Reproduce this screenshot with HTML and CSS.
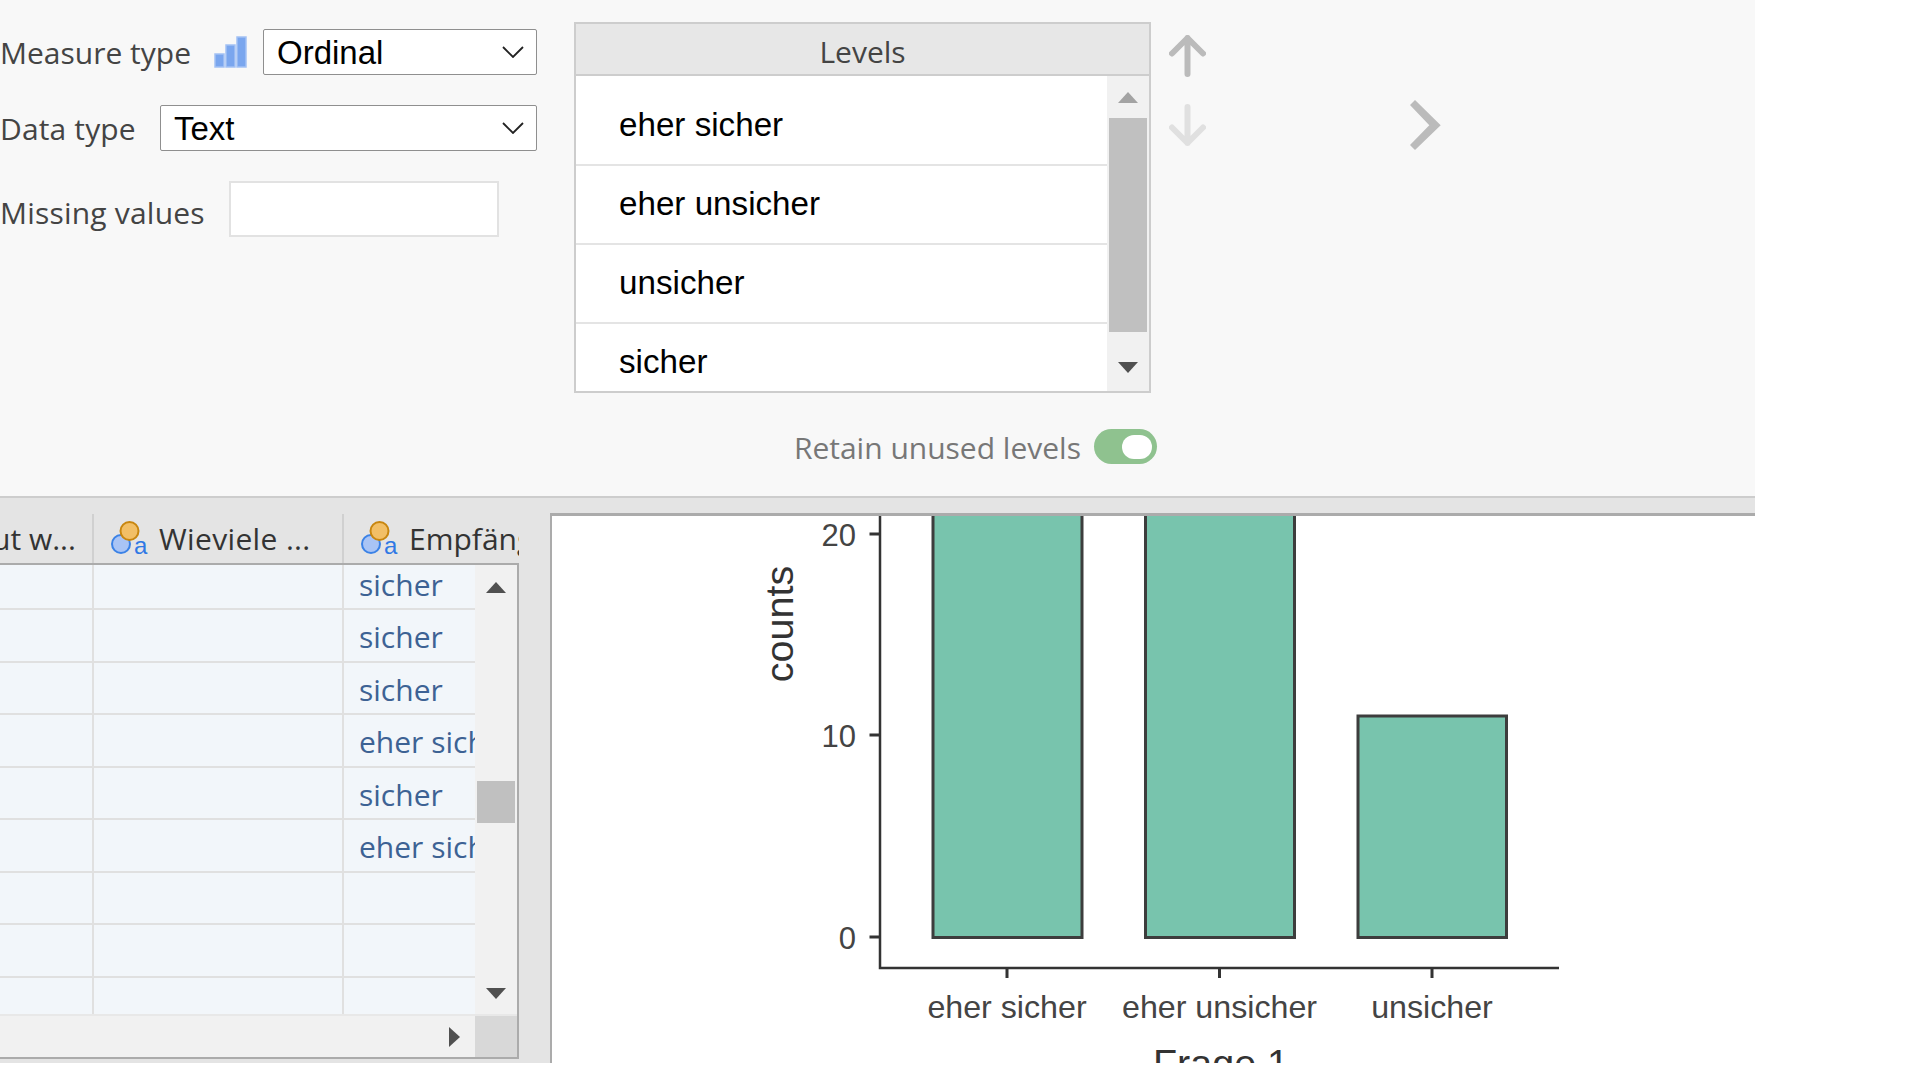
FILE: index.html
```html
<!DOCTYPE html>
<html lang="de">
<head>
<meta charset="utf-8">
<title>Levels</title>
<link rel="stylesheet" href="styles.css">
</head>
<body>
<div class="app">
  <section class="props">
    <div class="form">
      <div class="form-row row-measure">
        <span class="label label-measure">Measure type</span>
        <svg class="measure-icon" width="33" height="32" viewBox="0 0 33 32"><rect x="1" y="18" width="9" height="13"/><rect x="12" y="9" width="9" height="22"/><rect x="23" y="1" width="9" height="30"/></svg>
        <div class="select select-measure"><span>Ordinal</span><svg class="caret" width="22" height="12" viewBox="0 0 22 12"><path d="M1 1l10 10L21 1"/></svg></div>
      </div>
      <div class="form-row row-data">
        <span class="label label-data">Data type</span>
        <div class="select select-data"><span>Text</span><svg class="caret" width="22" height="12" viewBox="0 0 22 12"><path d="M1 1l10 10L21 1"/></svg></div>
      </div>
      <div class="form-row row-missing">
        <span class="label label-missing">Missing values</span>
        <div class="input"></div>
      </div>
    </div>
    <div class="levels-col">
      <div class="levels">
        <div class="levels-head">Levels</div>
        <div class="levels-body">
          <div class="levels-list">
            <div class="level">eher sicher</div>
            <div class="level">eher unsicher</div>
            <div class="level">unsicher</div>
            <div class="level">sicher</div>
          </div>
          <div class="vscroll vscroll-levels">
            <span class="tri tri-up tri-faint"></span>
            <span class="thumb thumb-levels"></span>
            <span class="tri tri-down"></span>
          </div>
        </div>
      </div>
      <div class="retain">
        <span class="retain-label">Retain unused levels</span>
        <span class="toggle"><span class="knob"></span></span>
      </div>
    </div>
    <div class="move">
      <svg class="arrow arrow-on" width="37" height="42" viewBox="0 0 37 42"><path d="M18.500 39V3M3 18.500 18.500 3 34 18.500"/></svg>
      <svg class="arrow arrow-off" width="37" height="42" viewBox="0 0 37 42"><path d="M18.500 3v36M3 23.500 18.500 39 34 23.500"/></svg>
    </div>
    <svg class="chevron" width="31" height="50" viewBox="0 0 31 50"><polygon points="5,0 30.700,25.300 5,50 0,45 19.300,25.300 0,5"/></svg>
  </section>

  <section class="lower">
    <div class="table">
      <div class="thead">
        <div class="th th-a"><span class="th-text th-text-a">ut w...</span></div>
        <div class="th th-b">
          <svg class="var-icon" width="40" height="36" viewBox="0 0 40 36"><circle cx="11" cy="23" r="9"/><circle class="orange" cx="19.500" cy="10" r="9"/><text x="24" y="33">a</text></svg>
          <span class="th-text">Wieviele ...</span>
        </div>
        <div class="th th-c">
          <svg class="var-icon" width="40" height="36" viewBox="0 0 40 36"><circle cx="11" cy="23" r="9"/><circle class="orange" cx="19.500" cy="10" r="9"/><text x="24" y="33">a</text></svg>
          <span class="th-text">Empfäng</span>
        </div>
      </div>
      <div class="tbody">
        <div class="tmain">
          <div class="tdata">
            <div class="tr"><div class="td"></div><div class="td"></div><div class="td td-val">sicher</div></div>
            <div class="tr"><div class="td"></div><div class="td"></div><div class="td td-val">sicher</div></div>
            <div class="tr"><div class="td"></div><div class="td"></div><div class="td td-val">sicher</div></div>
            <div class="tr"><div class="td"></div><div class="td"></div><div class="td td-val">eher sicher</div></div>
            <div class="tr"><div class="td"></div><div class="td"></div><div class="td td-val">sicher</div></div>
            <div class="tr"><div class="td"></div><div class="td"></div><div class="td td-val">eher sicher</div></div>
            <div class="tr"><div class="td"></div><div class="td"></div><div class="td td-val"></div></div>
            <div class="tr"><div class="td"></div><div class="td"></div><div class="td td-val"></div></div>
            <div class="tr"><div class="td"></div><div class="td"></div><div class="td td-val"></div></div>
          </div>
          <div class="vscroll vscroll-table">
            <span class="tri tri-up"></span>
            <span class="thumb thumb-table"></span>
            <span class="tri tri-down"></span>
          </div>
        </div>
        <div class="hbar">
          <div class="hbar-track"><span class="tri-right"></span></div>
          <div class="hbar-corner"></div>
        </div>
      </div>
    </div>
    <div class="plot">
      <svg class="chart" width="1203" height="547" viewBox="552 516 1203 547">
        <g class="bars">
          <rect x="933" y="480" width="149" height="457.500"/>
          <rect x="1145.500" y="480" width="149" height="457.500"/>
          <rect x="1358" y="716" width="148.500" height="221.500"/>
        </g>
        <path class="axis" d="M880 515V968H1559"/>
        <path class="tick" d="M869.500 534H880M869.500 735H880M869.500 937H880M1007 968V978M1219.500 968V978M1432 968V978"/>
        <g class="ticks-y">
          <text x="856" y="546">20</text>
          <text x="856" y="747">10</text>
          <text x="856" y="949">0</text>
        </g>
        <g class="ticks-x">
          <text x="1007" y="1017.500">eher sicher</text>
          <text x="1219.500" y="1017.500">eher unsicher</text>
          <text x="1432" y="1017.500">unsicher</text>
        </g>
        <text class="axis-title" transform="translate(793 624) rotate(-90)">counts</text>
        <text class="axis-title" x="1221" y="1077">Frage 1</text>
      </svg>
    </div>
  </section>
</div>
</body>
</html>
```

FILE: styles.css
```css
* { box-sizing: border-box; }
html, body { margin: 0; padding: 0; background: #fff; overflow: hidden; }
body { width: 1920px; height: 1080px; font-family: "Open Sans", "Noto Sans", sans-serif; }

.app { width: 1755px; height: 1063px; display: flex; flex-direction: column; }

/* top properties panel */
.props { height: 498px; flex: none; display: flex; align-items: flex-start; background: #f8f8f8; border-bottom: 2px solid #cdcdcd; }
.form { width: 537px; flex: none; padding-top: 29px; }
.form-row { display: flex; align-items: center; }
.row-data { margin-top: 30px; }
.row-missing { margin-top: 30px; }
.label { font-size: 30px; color: #444; white-space: nowrap; flex: none; }
.label-measure { width: 191px; padding-top: 1px; }
.label-data { width: 135px; letter-spacing: 0.150px; }
.label-missing { width: 203px; padding-top: 7px; letter-spacing: 0.200px; }
.measure-icon { margin: 0 0 0 23px; flex: none; }
.measure-icon rect { fill: #7aa6ee; stroke: #a3c1f4; stroke-width: 1.500; }
.select { height: 46px; background: #fff; border: 1.500px solid #8f8f8f; border-radius: 2px; display: flex; align-items: center; justify-content: space-between; padding: 0 12px 0 13px; font: 33px "Liberation Sans", Arial, sans-serif; color: #000; }
.select span { position: relative; top: 1px; }
.select-measure { width: 274px; margin-left: 16px; }
.select-data { width: 377px; margin-left: 25px; }
.caret { flex: none; }
.caret path { fill: none; stroke: #222; stroke-width: 1.800; }
.input { width: 270px; height: 56px; background: #fff; border: 2px solid #e2e2e2; margin-left: 26px; }

.levels-col { width: 577px; flex: none; margin-left: 37px; padding-top: 22px; }
.levels { height: 371px; border: 2px solid #cdcdcd; display: flex; flex-direction: column; background: #fff; }
.levels-head { height: 52px; flex: none; background: #e7e7e7; border-bottom: 2px solid #cdcdcd; font-size: 30px; color: #444; display: flex; align-items: center; justify-content: center; padding-top: 4px; }
.levels-body { flex: 1; min-height: 0; display: flex; }
.levels-list { flex: 1; min-width: 0; overflow: hidden; padding-top: 11px; }
.level { height: 79px; border-bottom: 2px solid #e4e4e4; padding: 0 0 2px 43px; display: flex; align-items: center; font: 33.200px "Liberation Sans", Arial, sans-serif; color: #000; }

.vscroll { flex: none; background: #f1f1f1; display: flex; flex-direction: column; align-items: center; }
.vscroll-levels { width: 42px; padding-top: 16px; }
.vscroll-table { width: 42px; padding-top: 17px; }
.thumb { display: block; width: 38px; background: #c0c0c0; flex: none; }
.thumb-levels { height: 214px; margin-top: 15px; }
.thumb-table { height: 42px; margin-top: 188px; }
.tri { display: block; width: 0; height: 0; border-left: 10.500px solid transparent; border-right: 10.500px solid transparent; flex: none; }
.tri-up { border-bottom: 11px solid #505050; }
.tri-faint { border-bottom-color: #a3a3a3; }
.tri-down { border-top: 11px solid #505050; }
.vscroll-levels .tri-down { margin-top: 30px; }
.vscroll-table .tri-down { margin-top: 165px; }

.retain { display: flex; align-items: center; justify-content: flex-end; margin: 32px -6px 0 0; gap: 13px; }
.retain-label { font-size: 30px; color: #777; white-space: nowrap; padding-top: 2px; }
.toggle { width: 63px; height: 35px; border-radius: 18px; background: #8fc28f; display: flex; align-items: center; justify-content: flex-end; padding-right: 5px; flex: none; }
.knob { width: 30px; height: 24px; border-radius: 12px; background: #fff; }

.move { flex: none; margin-left: 18px; padding-top: 35px; display: flex; flex-direction: column; gap: 27px; }
.arrow { display: block; }
.arrow path { fill: none; stroke-width: 6; stroke-linecap: round; stroke-linejoin: round; }
.arrow-on path { stroke: #bbb; }
.arrow-off path { stroke: #e0e0e0; }
.chevron { flex: none; margin: 100px 0 0 204px; }
.chevron polygon { fill: #bbb; }

/* lower part */
.lower { flex: 1; min-height: 0; display: flex; background: #e4e4e4; }
.table { width: 519px; flex: none; display: flex; flex-direction: column; }
.thead { height: 67px; flex: none; display: flex; overflow: hidden; border-bottom: 2px solid #ababab; }
.th { height: 49px; margin-top: 16px; display: flex; align-items: center; border-right: 2px solid #d0d0d0; flex: none; color: #333; }
.th-a { width: 94px; overflow: hidden; }
.th-b { width: 250px; padding-left: 16px; }
.th-c { border-right: 0; flex: 1; min-width: 0; padding-left: 16px; overflow: hidden; }
.th-text { font-size: 30px; white-space: nowrap; }
.th-b .th-text { letter-spacing: 0.350px; }
.th-text-a { margin-left: -8px; }
.var-icon { flex: none; margin-right: 9px; }
.var-icon circle { fill: #a9c4f5; stroke: #3b82e6; stroke-width: 2; }
.var-icon .orange { fill: #f2bf66; stroke: #c8860f; }
.var-icon text { font: 24px "Liberation Sans", Arial, sans-serif; fill: #2f78e4; }

.tbody { height: 494px; flex: none; border-right: 2px solid #ababab; border-bottom: 2px solid #ababab; display: flex; flex-direction: column; }
.tmain { flex: 1; min-height: 0; display: flex; }
.tdata { width: 475px; flex: none; overflow: hidden; background: #f2f6fa; }
.tr { height: 52.500px; display: flex; border-bottom: 2px solid #e0e0e0; }
.tr:first-child { margin-top: -7.500px; }
.td { width: 94px; flex: none; border-right: 2px solid #e0e0e0; }
.td:nth-child(2) { width: 250px; }
.td-val { width: auto; flex: 1; min-width: 0; border-right: 0; padding: 6px 0 0 15px; font-size: 30px; line-height: 42px; color: #3d6294; white-space: nowrap; overflow: hidden; }
.hbar { height: 43px; flex: none; display: flex; border-top: 2px solid #e8e8e8; }
.hbar-track { flex: 1; background: #f1f1f1; display: flex; align-items: center; justify-content: flex-end; padding-right: 15px; }
.tri-right { width: 0; height: 0; border-top: 10.500px solid transparent; border-bottom: 10.500px solid transparent; border-left: 11px solid #505050; }
.hbar-corner { width: 42px; background: #d8d8d8; }

.plot { flex: 1; min-width: 0; margin: 15px 0 0 31px; background: #fff; border-left: 2px solid #ababab; border-top: 3px solid #ababab; overflow: hidden; }
.chart { display: block; }
.chart text { font-family: "Liberation Sans", Arial, sans-serif; fill: #444; }
.bars rect { fill: #78c4ad; stroke: #3d3d3d; stroke-width: 3; }
.axis { fill: none; stroke: #333; stroke-width: 2.500; }
.tick { fill: none; stroke: #333; stroke-width: 3; }
.ticks-y text { font-size: 31px; text-anchor: end; }
.ticks-x text { font-size: 32.200px; text-anchor: middle; }
.chart .axis-title { font-size: 39.500px; text-anchor: middle; fill: #333; }
```
